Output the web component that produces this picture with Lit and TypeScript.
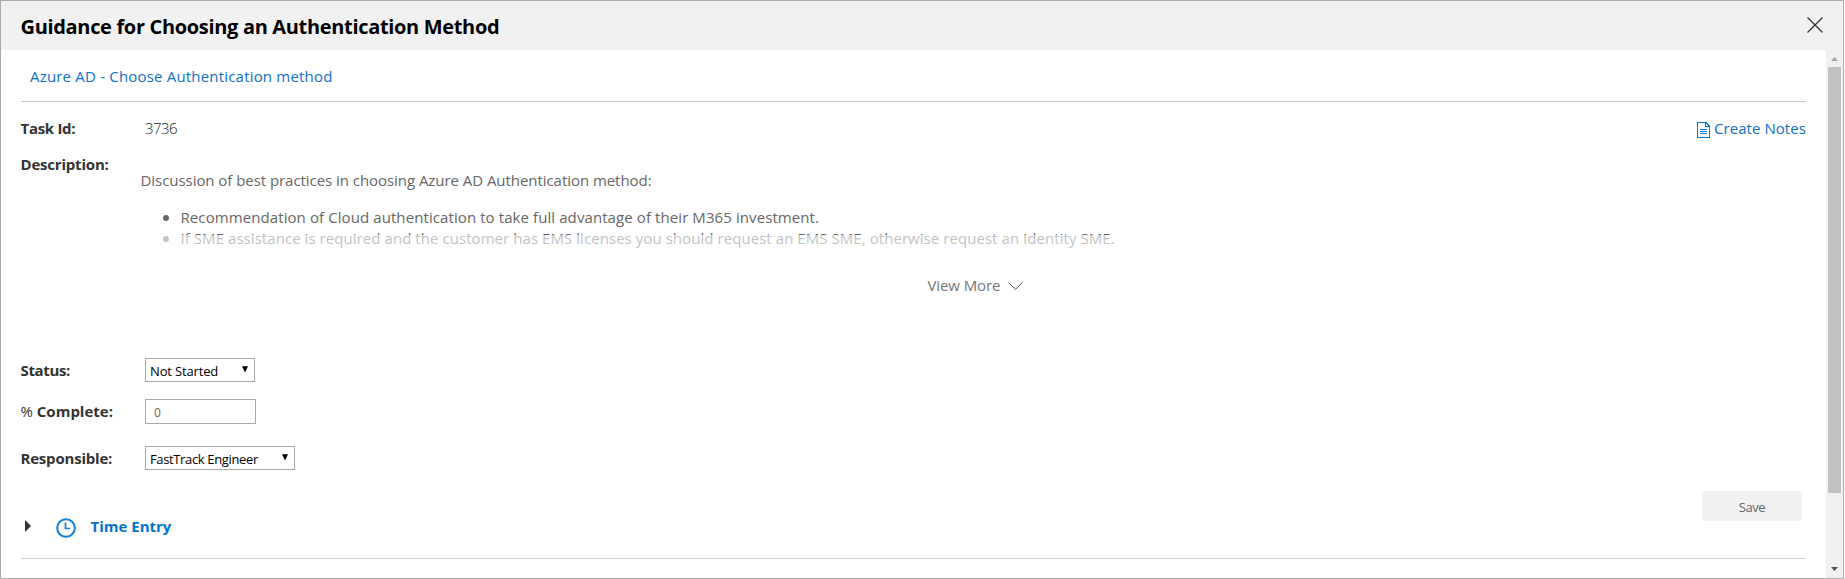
import { LitElement, html, css } from "lit";
import { customElement, property } from "lit/decorators.js";

@customElement("select-box")
class SelectBox extends LitElement {
  @property() value = "";
  static styles = css`
    :host { display: flex; box-sizing: border-box; height: 24px; border: 1px solid #a9a9a9; background: #fff;
      align-items: center; justify-content: space-between; padding: 2px 6px 0 4px;
      font-size: 13px; line-height: 20px; color: #000; white-space: nowrap; }
    svg { display: block; margin-bottom: 3px; }
  `;
  render() {
    return html`<span>${this.value}</span>
      <svg width="6" height="7" viewBox="0 0 6 7"><path d="M0 0.3H6L3 6.6Z" fill="#000" /></svg>`;
  }
}

@customElement("app-root")
class AppRoot extends LitElement {
  static styles = css`
    :host { display: block; font: 15px/22px "Open Sans", sans-serif; color: #333; }
    * { box-sizing: border-box; }
    .dialog { width: 1844px; height: 579px; border: 1px solid #ababab; display: flex; flex-direction: column; background: #fff; overflow: hidden; }
    header { flex: 0 0 49px; background: #f1f1f1; display: flex; align-items: center; justify-content: space-between; padding: 0 20px 0 19.5px; }
    h1 { margin: 3px 0 0; font-size: 20px; line-height: 28px; font-weight: 700; letter-spacing: -0.33px; color: #000; white-space: nowrap; }
    svg { display: block; flex: none; }
    header svg { margin-bottom: 2px; }
    .body { flex: 1; display: flex; min-height: 0; }
    .content { flex: 1; padding: 0 20px; min-width: 0; }
    .crumb { height: 52px; padding: 15px 0 0 9px; border-bottom: 1px solid #c4c4c4; color: #0f70c4; letter-spacing: 0.19px; }
    .row { display: grid; grid-template-columns: 124px 1fr auto; align-items: start; }
    .label { font-weight: 700; white-space: nowrap; letter-spacing: -0.2px; margin-left: -0.5px; }
    .task { margin-top: 15px; height: 36px; }
    .task .label { letter-spacing: -0.3px; }
    .id { font-weight: 300; letter-spacing: -0.6px; color: #222; }
    .notes { display: flex; align-items: center; gap: 3px; color: #0f70c4; letter-spacing: 0.07px; }
    .notes svg { margin-top: 3px; }
    .desc { height: 121px; color: #666; }
    .desc .label { color: #333; }
    .text { padding-top: 16px; margin-left: -4.5px; white-space: nowrap; height: 121px; position: relative; }
    p { margin: 0 0 16px; letter-spacing: -0.05px; }
    ul { margin: 0; padding: 0; list-style: none; line-height: 21px; }
    li { display: flex; align-items: center; gap: 11.5px; padding-left: 22.5px; letter-spacing: 0.09px; }
    li + li { letter-spacing: 0.06px; }
    li::before { content: ""; width: 6px; height: 6px; margin-top: 1px; border-radius: 50%; background: currentColor; }
    .fade { position: absolute; left: 0; right: 0; top: 82px; height: 39px; background: rgba(255, 255, 255, 0.6); }
    .more { height: 22px; display: flex; padding-left: 906.5px; align-items: center; gap: 8px; color: #777; letter-spacing: -0.1px; }
    .more svg { margin-top: 2px; }
    .status { margin-top: 62px; height: 41px; }
    .percent { height: 47px; }
    .resp { height: 45px; }
    .status .label, .percent .label, .resp .label { padding-top: 1px; }
    .status .label { letter-spacing: -0.35px; }
    .percent .label { letter-spacing: 0; }
    .status select-box { width: 110px; letter-spacing: -0.15px; }
    .resp select-box { width: 150px; letter-spacing: -0.36px; }
    .pct { font-weight: 500; }
    .input { width: 111px; height: 25px; border: 1px solid #a6acac; padding: 2px 8px 0; font-size: 12px; line-height: 21px; color: #666; }
    .foot { height: 68px; display: flex; justify-content: space-between; border-bottom: 1px solid #d0d0d0; }
    .entry { display: flex; align-items: center; height: 22px; margin-top: 24px; padding-left: 4px; color: #0072c9; font-weight: 700; }
    .entry .clock { margin: 3px 14.5px 0 25px; }
    .save { width: 100px; height: 30px; margin-right: 4px; background: #f1f1f1; color: #666; text-align: center; font-size: 13px; line-height: 32px; letter-spacing: -0.4px; }
    .scroll { flex: 0 0 17px; background: #f1f1f1; display: flex; flex-direction: column; align-items: center; padding: 7px 0; justify-content: space-between; }
    .thumb { width: 13px; height: 426px; margin: 6px 0 auto; background: #c1c1c1; }
  `;

  render() {
    return html`
      <div class="dialog">
        <header>
          <h1>Guidance for Choosing an Authentication Method</h1>
          <svg width="16" height="16" viewBox="0 0 16 16"><path d="M0.5 0.5L15.5 15.5M15.5 0.5L0.5 15.5" stroke="#333" stroke-width="1.3" /></svg>
        </header>
        <div class="body">
          <div class="content">
            <div class="crumb">Azure AD - Choose Authentication method</div>
            <div class="row task">
              <span class="label">Task Id:</span>
              <span class="id">3736</span>
              <span class="notes">
                <svg width="14" height="16" viewBox="0 0 14 16" fill="none" stroke="#0078d7" shape-rendering="crispEdges">
                  <path d="M0.5 0.5H9L12.5 4V15.5H0.5Z" /><path d="M8.5 0.5V4.5H12.5M3 7.5H10M3 9.5H10M3 11.5H10" />
                </svg>
                Create Notes
              </span>
            </div>
            <div class="row desc">
              <span class="label">Description:</span>
              <div class="text">
                <p>Discussion of best practices in choosing Azure AD Authentication method:</p>
                <ul>
                  <li>Recommendation of Cloud authentication to take full advantage of their M365 investment.</li>
                  <li>If SME assistance is required and the customer has EMS licenses you should request an EMS SME, otherwise request an Identity SME.</li>
                </ul>
                <div class="fade"></div>
              </div>
            </div>
            <div class="more">
              <span>View More</span>
              <svg width="15" height="8" viewBox="0 0 15 8"><path d="M0.5 0.5L7.5 7.3L14.5 0.5" fill="none" stroke="#555" /></svg>
            </div>
            <div class="row status"><span class="label">Status:</span><select-box value="Not Started"></select-box></div>
            <div class="row percent"><span class="label"><span class="pct">%</span> Complete:</span><div class="input">0</div></div>
            <div class="row resp"><span class="label">Responsible:</span><select-box value="FastTrack Engineer"></select-box></div>
            <div class="foot">
              <div class="entry">
                <svg width="6" height="12" viewBox="0 0 6 12"><path d="M0 0L6 6L0 12Z" fill="#333" /></svg>
                <svg class="clock" width="20" height="20" viewBox="0 0 20 20" fill="none" stroke="#1080d8" stroke-width="2">
                  <circle cx="10" cy="10" r="8.8" /><path d="M9.5 4.5V10.5H14" stroke-width="1.7" />
                </svg>
                <span>Time Entry</span>
              </div>
              <div class="save">Save</div>
            </div>
          </div>
          <div class="scroll">
            <svg width="7" height="4" viewBox="0 0 7 4"><path d="M0 4L3.5 0L7 4Z" fill="#a3a3a3" /></svg>
            <div class="thumb"></div>
            <svg width="7" height="4" viewBox="0 0 7 4"><path d="M0 0H7L3.5 4Z" fill="#505050" /></svg>
          </div>
        </div>
      </div>
    `;
  }
}
